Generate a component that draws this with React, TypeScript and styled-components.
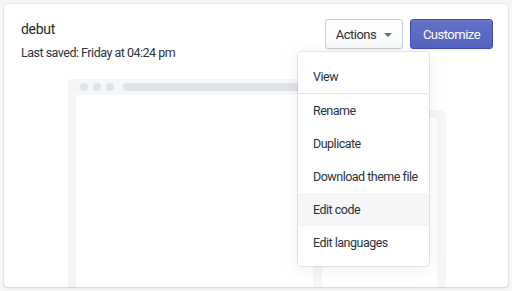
import React from 'react';
import styled, { createGlobalStyle } from 'styled-components';

const GlobalStyle = createGlobalStyle`
    html, body {
        margin: 0;
        padding: 0;
        background: #f4f6f8;
    }
    body {
        font-family: Roboto, 'Noto Sans', sans-serif;
        color: #212b36;
        -webkit-font-smoothing: antialiased;
    }
`;

const Page = styled.div`
    padding: 4px;
    width: 512px;
    height: 291px;
    box-sizing: border-box;
`;

const Card = styled.div`
    display: flex;
    flex-direction: column;
    width: 504px;
    height: 283px;
    box-sizing: border-box;
    padding: 15px 15px 0 17px;
    background: #fff;
    border-radius: 4px;
    box-shadow: 0 0 0 1px rgba(63, 63, 68, 0.05), 0 1px 3px 0 rgba(63, 63, 68, 0.15);
    overflow: hidden;
`;

const Header = styled.div`
    display: flex;
    justify-content: space-between;
    align-items: flex-start;
    position: relative;
    z-index: 2;
`;

const Title = styled.div`
    font-size: 14px;
    line-height: 20px;
    letter-spacing: -0.3px;
`;

const Meta = styled.div`
    margin-top: 4px;
    font-size: 12.5px;
    line-height: 20px;
    letter-spacing: -0.5px;
    color: #2a333d;
`;

const ButtonGroup = styled.div`
    display: flex;
    gap: 7px;
`;

const ActionsWrap = styled.div`
    position: relative;
`;

const Button = styled.button<{ $primary?: boolean; $width: number }>`
    display: flex;
    align-items: center;
    justify-content: center;
    gap: 8px;
    width: ${p => p.$width}px;
    height: 30px;
    padding: 0;
    border-radius: 3px;
    font-family: inherit;
    font-size: 13px;
    letter-spacing: -0.5px;
    cursor: pointer;
    color: ${p => (p.$primary ? '#fff' : '#2a333d')};
    background: ${p =>
        p.$primary
            ? 'linear-gradient(180deg, #6371c7, #5563c1)'
            : 'linear-gradient(180deg, #fff, #f9fafb)'};
    border: 1px solid ${p => (p.$primary ? '#3f4eae' : '#c4cdd5')};
    box-shadow: ${p =>
        p.$primary
            ? 'inset 0 1px 0 0 #6f7bcb, 0 1px 0 0 rgba(22,29,37,.05)'
            : '0 1px 0 0 rgba(22,29,37,.05)'};
`;

const Caret = styled.span`
    width: 0;
    height: 0;
    margin-top: 1px;
    border-left: 4px solid transparent;
    border-right: 4px solid transparent;
    border-top: 4px solid #637381;
`;

const Menu = styled.div`
    position: absolute;
    top: 33px;
    left: -27px;
    width: 131px;
    padding-top: 7px;
    padding-bottom: 7px;
    background: #fff;
    border-radius: 4px;
    box-shadow: 0 0 0 1px rgba(6, 44, 82, 0.1), 0 2px 16px rgba(33, 43, 54, 0.08);
`;

const MenuSection = styled.div`
    & + & {
        border-top: 1px solid #dfe3e8;
    }
`;

const MenuItem = styled.div<{ $active?: boolean; $tall?: boolean }>`
    height: ${p => (p.$tall ? 34 : 33)}px;
    display: flex;
    align-items: center;
    padding-left: 15px;
    font-size: 12.5px;
    letter-spacing: -0.5px;
    color: #2a333d;
    background: ${p => (p.$active ? '#f4f6f8' : 'transparent')};
    white-space: nowrap;
`;

const Preview = styled.div`
    position: relative;
    flex: 1;
    margin-top: 16px;
    padding-left: 47px;
    z-index: 1;
`;

const DesktopFrame = styled.div`
    width: 330px;
    height: 230px;
    background: #f4f6f8;
    border-radius: 5px 5px 0 0;
    padding: 0 8px;
    box-sizing: border-box;
`;

const FrameBar = styled.div`
    display: flex;
    align-items: center;
    gap: 5px;
    height: 16px;
    padding-left: 4px;
`;

const Dot = styled.span`
    width: 8px;
    height: 8px;
    border-radius: 50%;
    background: #dfe3e8;
`;

const Address = styled.span`
    flex: 1;
    height: 8px;
    margin-left: 4px;
    border-radius: 4px;
    background: #dfe3e8;
`;

const Screen = styled.div`
    height: 100%;
    background: #fff;
`;

const MobileFrame = styled.div`
    position: absolute;
    left: 292px;
    top: 31px;
    width: 133px;
    height: 220px;
    box-sizing: border-box;
    padding: 8px 9px 0;
    background: #f4f6f8;
    border-radius: 6px 6px 0 0;
`;

const App = () => {
    return (
        <Page>
            <GlobalStyle />
            <Card>
                <Header>
                    <div>
                        <Title>debut</Title>
                        <Meta>Last saved: Friday at 04:24 pm</Meta>
                    </div>
                    <ButtonGroup>
                        <ActionsWrap>
                            <Button $width={78}>
                                Actions
                                <Caret />
                            </Button>
                            <Menu>
                                <MenuSection>
                                    <MenuItem $tall>View</MenuItem>
                                </MenuSection>
                                <MenuSection>
                                    <MenuItem>Rename</MenuItem>
                                    <MenuItem>Duplicate</MenuItem>
                                    <MenuItem>Download theme file</MenuItem>
                                    <MenuItem $active>Edit code</MenuItem>
                                    <MenuItem>Edit languages</MenuItem>
                                </MenuSection>
                            </Menu>
                        </ActionsWrap>
                        <Button $primary $width={83}>
                            Customize
                        </Button>
                    </ButtonGroup>
                </Header>
                <Preview>
                    <DesktopFrame>
                        <FrameBar>
                            <Dot />
                            <Dot />
                            <Dot />
                            <Address />
                        </FrameBar>
                        <Screen />
                    </DesktopFrame>
                    <MobileFrame>
                        <Screen />
                    </MobileFrame>
                </Preview>
            </Card>
        </Page>
    );
};

export default App;
